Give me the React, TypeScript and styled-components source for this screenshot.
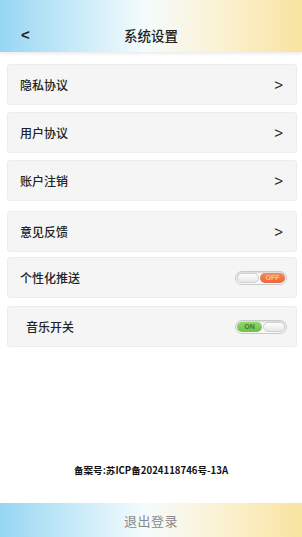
import React, { useState } from "react";
import styled, { createGlobalStyle } from "styled-components";

const GlobalStyle = createGlobalStyle`
  html, body { margin: 0; padding: 0; background: #fff; }
  body { font-family: "Noto Sans CJK SC", "Noto Sans", sans-serif; }
  * { box-sizing: border-box; }
`;

const Page = styled.div`
  width: 302px;
  height: 537px;
  display: flex;
  flex-direction: column;
  background: #fff;
  overflow: hidden;
`;

const Header = styled.div`
  height: 52px;
  flex-shrink: 0;
  display: flex;
  align-items: flex-end;
  padding: 0 0 7px;
  background: linear-gradient(90deg, #97d6f3 0%, #c8ebf8 25%, #f4fbfd 48%, #fbf3d8 70%, #f9e3a0 100%);
  box-shadow: 0 2px 3px rgba(0, 0, 0, 0.08);
  position: relative;
  z-index: 1;
`;

const HeaderRow = styled.div`
  width: 100%;
  height: 20px;
  display: grid;
  grid-template-columns: 60px 1fr 60px;
  align-items: center;
`;

const Back = styled.span`
  padding-left: 21px;
  font-family: "Liberation Sans", sans-serif;
  font-size: 15px;
  font-weight: 700;
  color: #222;
  line-height: 20px;
`;

const Title = styled.span`
  text-align: center;
  font-size: 13.5px;
  font-weight: 500;
  color: #222;
  line-height: 20px;
`;

const List = styled.div`
  display: flex;
  flex-direction: column;
  padding: 12px 5px 0 7px;
`;

const Card = styled.div<{ $top: number; $indent?: boolean }>`
  margin-top: ${(p) => p.$top}px;
  height: 41px;
  display: flex;
  align-items: center;
  justify-content: space-between;
  padding: 0 13px 0 ${(p) => (p.$indent ? 18 : 12)}px;
  background: #f5f5f5;
  border: 1px solid #ececec;
  border-radius: 3px;
`;

const Label = styled.span`
  font-size: 12px;
  font-weight: 500;
  color: #222;
`;

const Arrow = styled.span`
  font-family: "Liberation Sans", sans-serif;
  font-size: 15px;
  color: #222;
`;

const Toggle = styled.button<{ $on: boolean }>`
  width: 52px;
  height: 14px;
  margin-right: -4px;
  padding: 1px;
  border: 1px solid #c9c9c9;
  border-radius: 8px;
  background: #fafafa;
  box-shadow: inset 0 1px 2px rgba(0, 0, 0, 0.15);
  display: flex;
  flex-direction: ${(p) => (p.$on ? "row" : "row-reverse")};
  align-items: center;
  cursor: pointer;
  gap: 1px;
`;

const Track = styled.span<{ $on: boolean }>`
  flex: 1;
  height: 10px;
  border-radius: 6px;
  background: ${(p) => (p.$on ? "linear-gradient(#8fd96f, #6cc04a)" : "linear-gradient(#f58a5a, #e8683a)")};
  color: ${(p) => (p.$on ? "#3d7f25" : "#f8c2a8")};
  font-family: "Liberation Sans", sans-serif;
  font-weight: 700;
  font-size: 7px;
  line-height: 10px;
  text-align: center;
`;

const Knob = styled.span`
  width: 22px;
  height: 10px;
  border-radius: 6px;
  background: linear-gradient(#ffffff, #e6e6e6);
  border: 1px solid #cfcfcf;
`;

const Spacer = styled.div`
  flex: 1;
`;

const Record = styled.div`
  text-align: center;
  font-size: 9.6px;
  font-weight: 700;
  color: #111;
  padding-bottom: 26px;
`;

const Logout = styled.button`
  height: 34px;
  flex-shrink: 0;
  border: none;
  background: linear-gradient(90deg, #97d6f3 0%, #c8ebf8 25%, #f4fbfd 48%, #fbf3d8 70%, #f9e3a0 100%);
  font-family: "Noto Sans CJK SC", sans-serif;
  font-size: 13px;
  color: #8a8a8a;
  letter-spacing: 0.5px;
  cursor: pointer;
`;

type Item = { label: string; top: number; kind: "link" | "toggle"; indent?: boolean };

const items: Item[] = [
  { label: "隐私协议", top: 0, kind: "link" },
  { label: "用户协议", top: 7, kind: "link" },
  { label: "账户注销", top: 7, kind: "link" },
  { label: "意见反馈", top: 10, kind: "link" },
  { label: "个性化推送", top: 5, kind: "toggle" },
  { label: "音乐开关", top: 8, kind: "toggle", indent: true },
];

export default function App() {
  const [state, setState] = useState<Record<string, boolean>>({
    个性化推送: false,
    音乐开关: true,
  });
  return (
    <Page>
      <GlobalStyle />
      <Header>
        <HeaderRow>
          <Back>&lt;</Back>
          <Title>系统设置</Title>
          <span />
        </HeaderRow>
      </Header>
      <List>
        {items.map((it) => (
          <Card key={it.label} $top={it.top} $indent={it.indent}>
            <Label>{it.label}</Label>
            {it.kind === "link" ? (
              <Arrow>&gt;</Arrow>
            ) : (
              <Toggle
                $on={state[it.label]}
                onClick={() => setState((s) => ({ ...s, [it.label]: !s[it.label] }))}
              >
                <Track $on={state[it.label]}>{state[it.label] ? "ON" : "OFF"}</Track>
                <Knob />
              </Toggle>
            )}
          </Card>
        ))}
      </List>
      <Spacer />
      <Record>备案号:苏ICP备2024118746号-13A</Record>
      <Logout>退出登录</Logout>
    </Page>
  );
}
